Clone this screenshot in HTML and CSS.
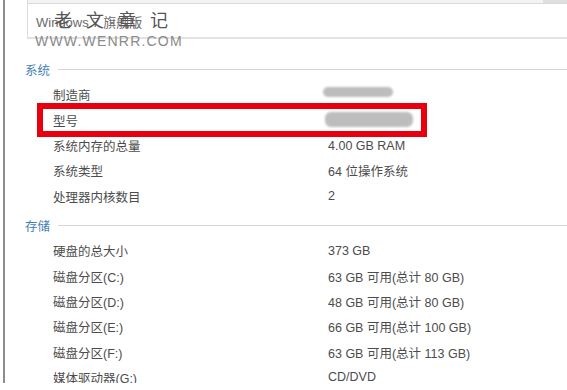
FILE: index.html
```html
<!DOCTYPE html>
<html lang="zh-CN">
<head>
    <meta charset="UTF-8">
    <title>系统属性</title>
    <link rel="stylesheet" href="styles.css">
</head>
<body>
    <div class="panel">
        <div class="edition-box">
            <div class="edition-top"></div>
            <div class="edition-text">Windows 7 旗舰版</div>
        </div>

        <!-- 水印 -->
        <div class="wm-chars">老文章记</div>
        <div class="wm-url">WWW.WENRR.COM</div>

        <div class="section-head first"><span>系统</span></div>
        <div class="rows">
            <div class="label">制造商</div><div class="value"></div>
            <div class="label">型号</div><div class="value"></div>
            <div class="label">系统内存的总量</div><div class="value">4.00 GB RAM</div>
            <div class="label">系统类型</div><div class="value">64 位操作系统</div>
            <div class="label">处理器内核数目</div><div class="value">2</div>
        </div>

        <div class="section-head"><span>存储</span></div>
        <div class="rows">
            <div class="label">硬盘的总大小</div><div class="value">373 GB</div>
            <div class="label">磁盘分区(C:)</div><div class="value">63 GB 可用(总计 80 GB)</div>
            <div class="label">磁盘分区(D:)</div><div class="value">48 GB 可用(总计 80 GB)</div>
            <div class="label">磁盘分区(E:)</div><div class="value">66 GB 可用(总计 100 GB)</div>
            <div class="label">磁盘分区(F:)</div><div class="value">63 GB 可用(总计 113 GB)</div>
            <div class="label">媒体驱动器(G:)</div><div class="value">CD/DVD</div>
        </div>

        <!-- 打码 + 红框 -->
        <div class="smudge s1"></div>
        <div class="smudge s2"></div>
        <div class="red-box"></div>
    </div>
</body>
</html>
```

FILE: styles.css
```css
body {
    margin: 0;
    padding: 0 0 0 3px;
    background: #fff;
    font-family: "Liberation Sans", "Noto Sans CJK SC", sans-serif;
    font-size: 12.5px;
    color: #4c4c4c;
}
.panel {
    position: relative;
    height: 383px;
    overflow: hidden;
    border-left: 2px solid #8e8e8e;
}
.edition-box {
    margin-left: 22px;
    height: 37px;
    border-left: 1px solid #dcdcdc;
    border-bottom: 2px solid #e2e2e2;
}
.edition-top {
    height: 3px;
    border-bottom: 1px solid #dadada;
    background: linear-gradient(90deg, #f3f3f3 0, #f3f3f3 515px, #dedede 515px);
}
.edition-text {
    padding: 8px 0 0 8px;
    color: #6a6a6a;
    font-size: 13px;
}
.wm-chars {
    position: absolute;
    left: 49px;
    top: 6px;
    font-family: "Noto Sans CJK SC", sans-serif;
    font-size: 18px;
    letter-spacing: 14px;
    color: #555;
}
.wm-url {
    position: absolute;
    left: 30px;
    top: 33px;
    font-size: 14px;
    letter-spacing: 1.2px;
    color: #8a8a8a;
}
.section-head {
    display: flex;
    align-items: center;
    height: 26.5px;
    padding: 3px 0 0 20px;
    color: #3f80b2;
}
.section-head.first {
    margin-top: 13.8px;
}
.section-head::after {
    content: '';
    flex: 1;
    height: 1px;
    margin-left: 8px;
    background: #d6d6d6;
}
.rows {
    display: grid;
    grid-template-columns: 275px 1fr;
    grid-auto-rows: 25.3px;
    align-items: center;
    padding-left: 48px;
}
.smudge {
    position: absolute;
    background: #bdbdbd;
    border-radius: 6px;
    filter: blur(1px);
}
.s1 {
    left: 318px;
    top: 87px;
    width: 70px;
    height: 10px;
}
.s2 {
    left: 320px;
    top: 112px;
    width: 88px;
    height: 15px;
}
.red-box {
    position: absolute;
    left: 32px;
    top: 103px;
    width: 378px;
    height: 22px;
    border: 6px solid #e8000f;
}
```
